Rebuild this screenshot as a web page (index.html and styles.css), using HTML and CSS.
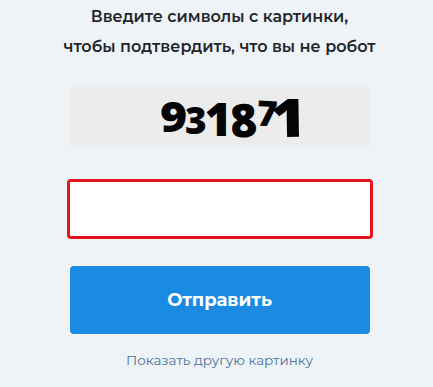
FILE: index.html
```html
<!DOCTYPE html>
<html lang="ru">
<head>
<meta charset="utf-8">
<title>Captcha</title>
<link rel="stylesheet" href="styles.css">
</head>
<body>
<main class="page">
  <form class="captcha-form">
    <p class="title">Введите символы с картинки,<br>чтобы подтвердить, что вы не робот</p>
    <div class="captcha-image" aria-label="931871">
      <span class="d d1">9</span><span class="d d2">3</span><span class="d d3">1</span><span class="d d4">8</span><span class="d d5">7</span><span class="d d6">1</span>
    </div>
    <input class="captcha-input" type="text" aria-label="Символы с картинки">
    <button class="submit" type="button">Отправить</button>
    <a class="refresh" href="#">Показать другую картинку</a>
  </form>
</main>
</body>
</html>
```

FILE: styles.css
```css
html, body {
  margin: 0;
  padding: 0;
  background: #eef3f8;
}

.page {
  display: flex;
  justify-content: center;
  padding-left: 6px;
  font-family: "Montserrat", "Open Sans", "Noto Sans", sans-serif;
}

.captcha-form {
  width: 300px;
  display: flex;
  flex-direction: column;
  align-items: center;
}

.title {
  margin: 2px -20px 0;
  font-size: 16px;
  font-weight: 600;
  line-height: 30px;
  color: #232629;
  text-align: center;
  white-space: nowrap;
}

.captcha-image {
  margin-top: 25px;
  width: 300px;
  height: 60px;
  background: #ececec;
  display: flex;
  justify-content: center;
  align-items: center;
  padding-left: 26px;
  box-sizing: border-box;
}

.d {
  font-family: "Open Sans", sans-serif;
  font-weight: 800;
  color: #050505;
  line-height: 1;
  display: inline-block;
}

.d1 { font-size: 43px; transform: translateY(-2px) scaleX(1.08); }
.d2 { font-size: 37px; transform: translateY(2px); margin-left: -1px; }
.d3 { font-size: 46px; transform: translateY(1px); margin-left: -2px; }
.d4 { font-size: 46px; transform: translateY(2px) rotate(-3deg); margin-left: -2px; }
.d5 { font-size: 35px; transform: translateY(-5px) rotate(3deg); margin-left: 0; }
.d6 { font-size: 53px; transform: translateY(-1px) rotate(-1deg) scaleX(1.15); margin-left: -4px; }

.captcha-input {
  margin-top: 32px;
  width: 306px;
  height: 60px;
  box-sizing: border-box;
  border: 3px solid #e3141c;
  border-radius: 4px;
  background: #ffffff;
  outline: none;
  font-size: 18px;
  padding: 0 12px;
}

.submit {
  margin-top: 27px;
  width: 300px;
  height: 68px;
  border: none;
  border-radius: 4px;
  background: #1a8ae2;
  color: #ffffff;
  font-family: "Montserrat", "Open Sans", sans-serif;
  font-size: 18px;
  font-weight: 700;
  cursor: pointer;
}

.refresh {
  margin-top: 16px;
  font-size: 13.5px;
  color: #4d7398;
  text-decoration: none;
  line-height: 20px;
}
```
